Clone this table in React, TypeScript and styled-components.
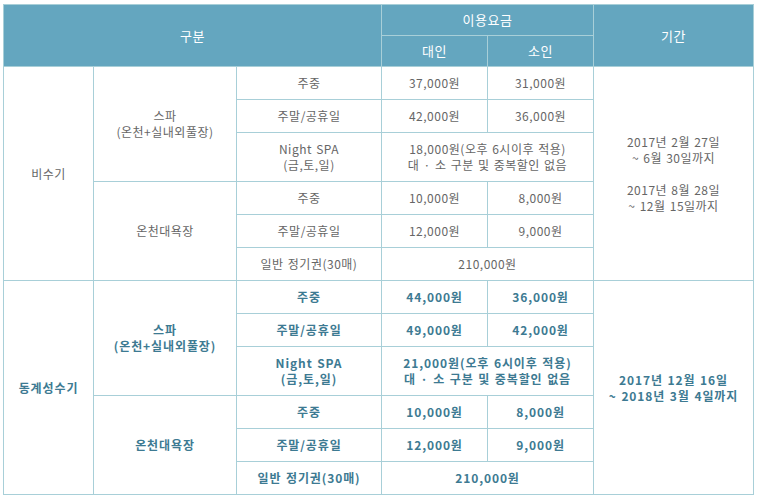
import styled, { createGlobalStyle } from 'styled-components';

const GlobalStyle = createGlobalStyle`
  body {
    margin: 0;
    padding: 4px 0 0 3px;
    background: #ffffff;
    font-family: "Noto Sans CJK KR", "Noto Sans", sans-serif;
  }
`;

const colors = {
  head: '#64a6bf',
  line: '#a8cfd8',
  text: '#666666',
  strong: '#3d7a92',
};

type Row = {
  item: React.ReactNode;
  adult: string;
  child?: string;
};

type Group = {
  name: React.ReactNode;
  rows: Row[];
};

type Season = {
  name: string;
  period: React.ReactNode;
  bold?: boolean;
  groups: Group[];
};

const spaRows = (p: string[]): Row[] => [
  { item: '주중', adult: p[0], child: p[1] },
  { item: '주말/공휴일', adult: p[2], child: p[3] },
  {
    item: (
      <>
        Night SPA
        <br />
        (금,토,일)
      </>
    ),
    adult: p[4],
  },
];

const bathRows = (p: string[]): Row[] => [
  { item: '주중', adult: p[0], child: p[1] },
  { item: '주말/공휴일', adult: p[2], child: p[3] },
  { item: '일반 정기권(30매)', adult: p[4] },
];

const spaName = (
  <>
    스파
    <br />
    (온천+실내외풀장)
  </>
);

const seasons: Season[] = [
  {
    name: '비수기',
    period: (
      <>
        2017년 2월 27일
        <br />~ 6월 30일까지
        <br />
        <br />
        2017년 8월 28일
        <br />~ 12월 15일까지
      </>
    ),
    groups: [
      {
        name: spaName,
        rows: spaRows(['37,000원', '31,000원', '42,000원', '36,000원', '18,000원(오후 6시이후 적용)']),
      },
      {
        name: '온천대욕장',
        rows: bathRows(['10,000원', '8,000원', '12,000원', '9,000원', '210,000원']),
      },
    ],
  },
  {
    name: '동계성수기',
    bold: true,
    period: (
      <>
        2017년 12월 16일
        <br />~ 2018년 3월 4일까지
      </>
    ),
    groups: [
      {
        name: spaName,
        rows: spaRows(['44,000원', '36,000원', '49,000원', '42,000원', '21,000원(오후 6시이후 적용)']),
      },
      {
        name: '온천대욕장',
        rows: bathRows(['10,000원', '8,000원', '12,000원', '9,000원', '210,000원']),
      },
    ],
  },
];

export default function App() {
  return (
    <>
      <GlobalStyle />
      <Table>
        <colgroup>
          <col style={{ width: 90 }} />
          <col style={{ width: 143 }} />
          <col style={{ width: 145 }} />
          <col style={{ width: 106 }} />
          <col style={{ width: 106 }} />
          <col style={{ width: 160 }} />
        </colgroup>
        <thead>
          <HeadRow>
            <Th colSpan={3} rowSpan={2}>
              구분
            </Th>
            <Th colSpan={2}>이용요금</Th>
            <Th rowSpan={2}>기간</Th>
          </HeadRow>
          <HeadRow>
            <Th>대인</Th>
            <Th>소인</Th>
          </HeadRow>
        </thead>
        <tbody>
          {seasons.map((s) =>
            s.groups.map((g, gi) =>
              g.rows.map((r, ri) => {
                const first = gi === 0 && ri === 0;
                const tall = !r.child && gi === 0;
                return (
                  <BodyRow key={`${s.name}-${gi}-${ri}`} $tall={tall}>
                    {first && (
                      <Td $bold={s.bold} rowSpan={6}>
                        {s.name}
                      </Td>
                    )}
                    {ri === 0 && (
                      <Td $bold={s.bold} rowSpan={3}>
                        {g.name}
                      </Td>
                    )}
                    <Td $bold={s.bold}>{r.item}</Td>
                    {r.child ? (
                      <>
                        <Td $bold={s.bold}>{r.adult}</Td>
                        <Td $bold={s.bold}>{r.child}</Td>
                      </>
                    ) : (
                      <Td $bold={s.bold} colSpan={2}>
                        {r.adult}
                        {tall && (
                          <>
                            <br />대 · 소 구분 및 중복할인 없음
                          </>
                        )}
                      </Td>
                    )}
                    {first && (
                      <Td $bold={s.bold} rowSpan={6}>
                        {s.period}
                      </Td>
                    )}
                  </BodyRow>
                );
              })
            )
          )}
        </tbody>
      </Table>
    </>
  );
}

const Table = styled.table`
  width: 750px;
  table-layout: fixed;
  border-collapse: collapse;
  border: 1px solid ${colors.line};
  font-size: 12px;
  line-height: 16px;
`;

const HeadRow = styled.tr`
  height: 31px;
`;

const Th = styled.th`
  background: ${colors.head};
  color: #ffffff;
  font-weight: normal;
  font-size: 13px;
  letter-spacing: 0.5px;
  text-align: center;
  vertical-align: middle;
  padding: 0;
  border: 1px solid ${colors.line};
`;

const BodyRow = styled.tr<{ $tall?: boolean }>`
  height: ${(p) => (p.$tall ? 49 : 33)}px;
`;

const Td = styled.td<{ $bold?: boolean }>`
  padding: 0;
  text-align: center;
  vertical-align: middle;
  border: 1px solid ${colors.line};
  color: ${(p) => (p.$bold ? colors.strong : colors.text)};
  font-weight: ${(p) => (p.$bold ? 'bold' : 'normal')};
  letter-spacing: ${(p) => (p.$bold ? '0.9px' : '0.5px')};
  word-spacing: 1px;
  white-space: nowrap;
`;
